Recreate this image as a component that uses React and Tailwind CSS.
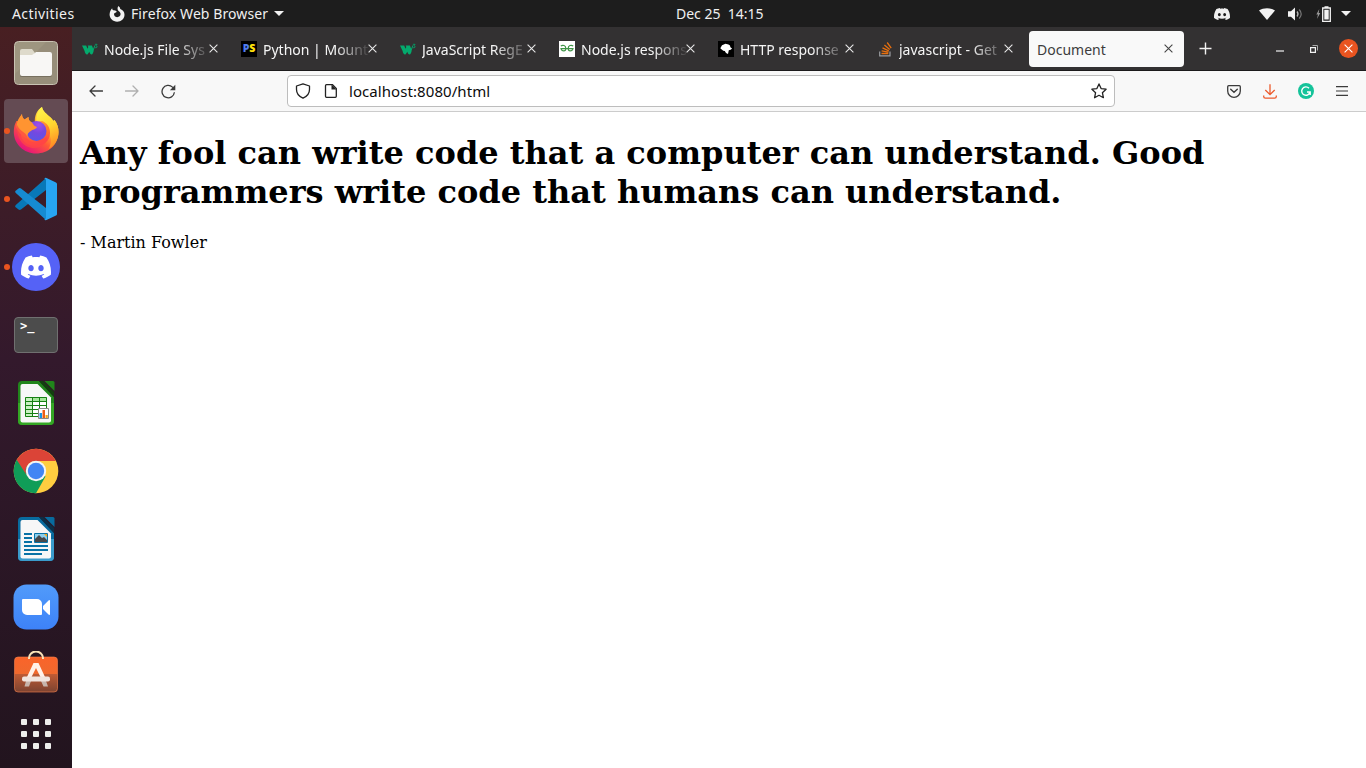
import React from "react";
import { SiDiscord } from "react-icons/si";

const W3 = () => (
  <svg width="16" height="16" viewBox="0 0 16 16">
    <path d="M0 4.600h4.200l1.300 3.200.8-1.800-.6-1.400h4.200l1.300 3.200 1.200-3.200h.9L11.700 9.300c-.2 2.400-1.200 4.200-2.200 4.200-.9 0-1.700-1.300-2.300-2.800-.9 2-1.700 3-2.500 2.800-1-.3-1.900-1.700-2.100-3.500z" fill="#04aa6d" />
    <path d="M12.900 3.300h2.200l-1.200 1.400c1.500 0 1.600 2.100 0 2.100-.5 0-.9-.2-1.100-.6" fill="none" stroke="#04aa6d" strokeWidth=".8" />
  </svg>
);
const Ps = () => (
  <span className="flex h-4 w-4 items-center justify-center bg-black font-['Open_Sans'] text-[10.500px] leading-none font-extrabold">
    <span className="text-[#4f7df0]">P</span>
    <span className="text-[#ffe00a]">S</span>
  </span>
);
const Gfg = () => (
  <svg width="16" height="16" viewBox="0 0 16 16">
    <rect width="16" height="16" fill="#fff" />
    <path d="M1.800 5c2-1.400 5-.6 5 2.400 0 3.200-3.600 3.400-4.800.3M1.400 7.600h13.200M14.200 5c-2-1.400-5-.6-5 2.400 0 3.200 3.600 3.400 4.800.3" fill="none" stroke="#419548" strokeWidth="1.200" />
  </svg>
);
const Blob = () => (
  <svg width="16" height="16" viewBox="0 0 16 16">
    <rect width="16" height="16" fill="#000" />
    <path d="M2.300 7.300 4 4.200 7.500 2.700l3 .9 1.500 1 .4 1.600 1.700 1.200-1.500 1.300-1.800.6-.8 3.800-2-1-1.200-2.200-1.500-.2L4 8.700z" fill="#fff" />
  </svg>
);
const So = () => (
  <svg width="16" height="16" viewBox="0 0 16 16">
    <path d="M2.700 10.500v4.300H13v-4.300" fill="none" stroke="#9a9ca0" strokeWidth="1.200" />
    <path d="M4.500 12.500h6.800M4.600 9.900l6.800 1.300M5.500 6.900l6.300 2.900M7.400 4l5.300 4.400M10.200 1.500l4 5.600" stroke="#e8700f" strokeWidth="1.300" />
  </svg>
);
const X = ({ c = "#e8e8e8" }) => (
  <svg width="9" height="9" viewBox="0 0 9 9" className="shrink-0">
    <path d="M.6.6l7.800 7.800M8.400.6.6 8.400" stroke={c} strokeWidth="1.100" />
  </svg>
);

const tabs = [
  { icon: <W3 />, t: "Node.js File Sys" },
  { icon: <Ps />, t: "Python | Mount" },
  { icon: <W3 />, t: "JavaScript RegE" },
  { icon: <Gfg />, t: "Node.js respons" },
  { icon: <Blob />, t: "HTTP response" },
  { icon: <So />, t: "javascript - Get" },
];

function TopBar() {
  return (
    <header className="flex h-[27px] shrink-0 items-center bg-[#1d1d1d] text-[14px] text-[#f0f0f0]">
      <span className="ml-3 w-[97px] tracking-[0.420px]">Activities</span>
      <svg width="16" height="16" viewBox="0 0 16 16">
        <path d="M9.300 0c1.200.8 1.900 1.800 2 3 2.700 1.100 4.200 3.100 4.200 5.700 0 3.900-3.300 7-7.400 7S.6 12.600.6 8.600C.6 6 1.700 3.700 3.200 2.300c0 1 .3 1.500.9 2 1.100-.2 2.200.1 3.100.8.5.4.5.9.1 1.200l-2 1c-.8 2 .8 3.900 2.900 3.900 1.900 0 3.400-1.300 3.400-3.100 0-1.300-.8-2.200-1.700-2.900C8.300 4.200 8.100 1.800 9.300 0z" fill="#f2f2f2" />
      </svg>
      <span className="ml-[6px] w-[143px] tracking-[0.090px] whitespace-nowrap">Firefox Web Browser</span>
      <svg width="10" height="5" viewBox="0 0 10 5"><path d="M0 0h10L5 5z" fill="#f2f2f2" /></svg>
      <span className="ml-[392px] w-[538px] whitespace-pre">Dec 25  14:15</span>
      <SiDiscord className="h-4 w-4 text-[#f0f0f0]" />
      <svg className="ml-[29px]" width="16" height="12" viewBox="0 0 16 12"><path d="M0 2.500C4.500-.5 11.500-.5 16 2.500L8 12z" fill="#f2f2f2" /></svg>
      <svg className="ml-[13px]" width="16" height="14" viewBox="0 0 16 14">
        <path d="M0 4.300h3L7 .5v13L3 9.700H0z" fill="#f2f2f2" />
        <path d="M9 4.500q2 2.500 0 5" fill="none" stroke="#b5b5b5" strokeWidth="1.300" />
        <path d="M11.200 2.500q4 4.500 0 9" fill="none" stroke="#777" strokeWidth="1.200" />
      </svg>
      <svg className="ml-[12px]" width="16" height="16" viewBox="0 0 16 16">
        <path d="M3.300 3 .3 8.500H2L.9 13l3.400-6H2.700z" fill="#999" />
        <path d="M6.700 2h7.600v13.300H6.700z" fill="none" stroke="#f2f2f2" strokeWidth="1.300" />
        <path d="M8.500.2h4V2h-4zM8.300 3.800h4.400v9.800H8.300z" fill="#f2f2f2" />
      </svg>
      <svg className="ml-[9px]" width="10" height="5" viewBox="0 0 10 5"><path d="M0 0h10L5 5z" fill="#f2f2f2" /></svg>
    </header>
  );
}

const Firefox = () => (
  <svg width="48" height="48" viewBox="0 0 48 48">
    <defs>
      <linearGradient id="ffBody" x1=".85" y1=".1" x2=".25" y2=".95">
        <stop offset="0" stopColor="#fff44f" /><stop offset=".35" stopColor="#ffb52a" /><stop offset=".62" stopColor="#ff5a36" /><stop offset="1" stopColor="#e5127d" />
      </linearGradient>
      <linearGradient id="ffFlame" x1=".3" y1="0" x2=".6" y2="1">
        <stop offset="0" stopColor="#fff34a" /><stop offset=".5" stopColor="#ffd62f" /><stop offset="1" stopColor="#ff8a24" />
      </linearGradient>
      <radialGradient id="ffGlobe" cx=".6" cy=".2" r=".8">
        <stop offset="0" stopColor="#a24fe8" /><stop offset=".5" stopColor="#7548e0" /><stop offset="1" stopColor="#5b55e6" />
      </radialGradient>
      <linearGradient id="ffFox" x1=".2" y1="0" x2=".5" y2="1">
        <stop offset="0" stopColor="#ffa43a" /><stop offset=".5" stopColor="#ff7a2a" /><stop offset="1" stopColor="#ff3d47" />
      </linearGradient>
    </defs>
    <path d="M30 0c1 5 5 7 8 10 2 2 3 3 3.500 4l1-1c3 4 4 8 4 12C46.500 38 36 46.500 24 46.500S1.800 37 1.800 25c0-5 1-8 2.700-11L6 14l4-7c0 3 1 4 2.500 5.500L16.500 10c0 3 1 5 6.500 6-1-7 2-13 7-16z" fill="url(#ffBody)" />
    <path d="M30 0c1 5 5 7 8 10 2 2 3 3 3.500 4l1-1c3 4 4 8 4 12 0 7-4 14-10 17 3-5 3-10 1-14-3-6-8-8-12-10-3-7 0-15 4.500-18z" fill="url(#ffFlame)" />
    <path d="M30 14c5 2 8 6 8 12 0 8-7 13-14 13-8 0-13-4-15-10 0-6 9-13 21-15z" fill="url(#ffFox)" />
    <circle cx="24.500" cy="24" r="10" fill="url(#ffGlobe)" />
    <path d="M10 7c0 3 1 4 2.500 5.500L16.500 10c0 3 1 5 4 6 1 2 2 3 4.500 4-1 3-5 2-6 4-4 2-4 5-3 8-5-2-9-6-11-10-1-4 0-9 5-15z" fill="#ff9431" />
    <path d="M5 18c3 7 10 7 11 14 3 4 9 4 12 1 3-2 6-1 7-4 0 8-6 12-13 12C12 41 4 32 5 18z" fill="#ff4545" opacity=".75" />
  </svg>
);
const Files = () => (
  <svg width="48" height="48" viewBox="0 0 48 48">
    <rect x="2.500" y="2.500" width="43" height="43" rx="4" fill="#9e9680" stroke="#c9c3b3" />
    <path d="M3 35 34 3h8a3 3 0 0 1 3 3v36a3 3 0 0 1-3 3H6a3 3 0 0 1-3-3z" fill="#8b8370" opacity=".4" />
    <path d="M8 12a2 2 0 0 1 2-2h10l3 4v6H8z" fill="#dedacb" />
    <path d="M8 37.500V16h13l3-3h14a2 2 0 0 1 2 2v21a2 2 0 0 1-2 2H10z" fill="#77705f" />
    <path d="M8 16h12l4-3h14a2 2 0 0 1 2 2v20a2 2 0 0 1-2 2H10a2 2 0 0 1-2-2z" fill="#f8f7f5" />
  </svg>
);
const Code = () => (
  <svg width="48" height="48" viewBox="0 0 48 48">
    <path d="M3.300 32q-.5-1 .5-2L34 3v12L9 34.500q-1.300.8-2.500 0l-2.500-2z" fill="#0878b8" />
    <path d="M3.300 16q-.5 1 .5 2L34 45V33L9 13.500q-1.300-.8-2.500 0L4 15.500z" fill="#168bd2" />
    <path d="M34.500 3 44 7.500q1 .5 1 1.500v30q0 1-1 1.500L34.500 45q-1.500.5-2.500-.5c1 0 2-.5 2-2v-37c0-1.500-1-2-2-2q1-1 2.500-.5z" fill="#27a5f2" />
  </svg>
);
const Discord = () => (
  <span className="flex h-12 w-12 items-center justify-center rounded-full bg-[#5562f6]">
    <SiDiscord className="h-[30px] w-[30px] text-white" />
  </span>
);
const Terminal = () => (
  <span className="flex h-9 w-11 items-start rounded-[4px] border border-[#707070] bg-[#4c4c4c] pt-[2px] pl-[5px] font-['DejaVu_Sans_Mono'] text-[12px] leading-none font-bold text-white">
    <span>&gt;_</span>
  </span>
);
const Sheet = ({ dark, light, corner, children }) => (
  <svg width="48" height="48" viewBox="0 0 48 48">
    <path d="M10 2h17l15 16v24a4 4 0 0 1-4 4H10a4 4 0 0 1-4-4V6a4 4 0 0 1 4-4z" fill={dark} />
    <path d="M6 24h36v18a4 4 0 0 1-4 4H10a4 4 0 0 1-4-4z" fill={light} />
    <path d="M10.500 5h15L39 18.500v23a2 2 0 0 1-2 2H10.500a2 2 0 0 1-2-2V7a2 2 0 0 1 2-2z" fill="#f7f7f7" />
    <path d="M27 2h4l11 11v5z" fill={corner} />
    <path d="M32.500 2H41q1.500 0 1.500 1.500V12z" fill={dark} />
    {children}
  </svg>
);
const Calc = () => (
  <Sheet dark="#21851b" light="#34a724" corner="#12400f">
    <path d="M13 18h22v20H13z" fill="#fff" /><path d="M13 18h22v4H13z" fill="#a4e59a" />
    <path d="M13 18h7v20h-7z" fill="#c8f0c0" />
    <path d="M13.500 18.500h21v19h-21zM13.500 22.500h21M13.500 26.500h21M13.500 30.500h21M13.500 34.500h21M20.500 18v20M27.500 18v20" fill="none" stroke="#178013" />
    <path d="M26.500 29.500h10v10h-10z" fill="#fff" stroke="#888" />
    <path d="M27.500 34h2.500v5h-2.500z" fill="#1697e3" /><path d="M30.500 31H33v8h-2.500z" fill="#ed5d16" /><path d="M33.500 36h2.300v3h-2.300z" fill="#f5a718" />
  </Sheet>
);
const Writer = () => (
  <Sheet dark="#086b9e" light="#3a9bcb" corner="#0b2f47">
    <path d="M12 19h8M12 23h8M12 27h8M12 31h24M12 35h24M12 39h18" stroke="#0872a6" strokeWidth="2" />
    <path d="M22.500 18.500h13v9h-13z" fill="#8bd0ef" stroke="#0872a6" />
    <path d="M23 27v-3l4-4 3 3 2-1 3 3v2z" fill="#47484a" /><path d="M32 19h3v3z" fill="#f5a718" />
  </Sheet>
);
const Chrome = () => (
  <svg width="48" height="48" viewBox="0 0 48 48">
    <circle cx="24" cy="24" r="22.300" fill="#ffcd40" />
    <path d="M24 24 4.700 12.850A22.300 22.300 0 0 0 24 46.300L33.500 29.500z" fill="#109d58" />
    <path d="M4.700 12.850A22.300 22.300 0 0 1 43.900 14H24a10 10 0 0 0-9.500 14z" fill="#db4437" />
    <circle cx="24" cy="24" r="10.200" fill="#f3f4f6" /><circle cx="24" cy="24" r="8.200" fill="#4285f4" />
  </svg>
);
const Zoom = () => (
  <svg width="48" height="48" viewBox="0 0 48 48">
    <defs><linearGradient id="zoomBg" x2="0" y2="1"><stop stopColor="#519bfa" /><stop offset="1" stopColor="#3d82f8" /></linearGradient></defs>
    <rect x="1.500" y="1.500" width="45" height="45" rx="13" fill="url(#zoomBg)" />
    <path d="M11 16h14a5 5 0 0 1 5 5v10q0 1-1 1H15a5 5 0 0 1-5-5V17q0-1 1-1zM31 23l5.500-5.500q1.500-1 1.500.5v13q0 1.500-1.500.5L31 26z" fill="#fff" />
  </svg>
);
const Software = () => (
  <svg width="48" height="48" viewBox="0 0 48 48">
    <defs><linearGradient id="bag" x2="0" y2="1"><stop stopColor="#fa642a" /><stop offset=".48" stopColor="#ef692e" /><stop offset=".5" stopColor="#bd5a34" /><stop offset="1" stopColor="#7c4331" /></linearGradient></defs>
    <rect x="2.500" y="6" width="43" height="35" rx="3.500" fill="url(#bag)" stroke="#f8824c" strokeOpacity=".6" />
    <path d="M17 8V7a7 6.500 0 0 1 14 0v1" fill="none" stroke="#f9e2b8" strokeWidth="2" />
    <path d="M15 26 21.500 12h5L33 26h-4.500l-4.500-9-4.500 9z" fill="#fff1e9" />
    <path d="M14 30h5l-2 5.500h-4.500zM29 30h5l2 5.500h-4.500z" fill="#c7b5ac" />
    <rect x="10" y="25.500" width="28" height="5" rx="2" fill="#f1e5df" />
  </svg>
);

const dock = [
  { i: <Files /> }, { i: <Firefox />, on: true, run: true }, { i: <Code />, run: true }, { i: <Discord />, run: true },
  { i: <Terminal /> }, { i: <Calc /> }, { i: <Chrome /> }, { i: <Writer /> }, { i: <Zoom /> }, { i: <Software /> },
];

function Dock() {
  return (
    <nav className="flex w-[72px] shrink-0 flex-col items-center gap-1 bg-linear-to-b from-[#481f22] via-[#33192c] via-45% to-[#22141e] pt-1">
      {dock.map((d, n) => (
        <div key={n} className={"relative flex h-16 w-16 shrink-0 items-center justify-center rounded-[4px] " + (d.on ? "bg-[#644b53]" : "")}>
          {d.run && <span className="absolute top-[29px] left-0 h-1.5 w-1.5 rounded-full bg-[#e95420]" />}
          {d.i}
        </div>
      ))}
      <div className="mt-[8px] grid grid-cols-3 gap-[6px]">
        {Array.from({ length: 9 }, (_, k) => <span key={k} className="h-[6px] w-[6px] rounded-[1px] bg-[#eeeeec]" />)}
      </div>
    </nav>
  );
}

function TabStrip() {
  return (
    <div className="flex h-11 shrink-0 items-center border-b border-[#1c1b1c] bg-[#333132] pl-[3px] text-[14px] text-[#f5f5f5]">
      <div className="flex gap-1">
        {tabs.map((t, n) => (
          <div key={n} className="flex h-9 w-[155px] items-center pl-[7px]">
            <span className="w-4 shrink-0">{t.icon}</span>
            <span className="ml-[6px] w-[105px] pt-px whitespace-nowrap [mask-image:linear-gradient(to_right,black_72px,transparent_108px)]">{t.t}</span>
            <X />
          </div>
        ))}
        <div className="flex h-9 w-[155px] items-center rounded-[4px] bg-[#f9f9f9] pl-2 text-[#3d3c3d]">
          <span className="w-[126.500px] pt-px">Document</span>
          <X c="#444" />
        </div>
      </div>
      <svg className="ml-[15px]" width="13" height="13" viewBox="0 0 13 13"><path d="M6.500.5v12M.5 6.500h12" stroke="#f2f2f2" strokeWidth="1.400" /></svg>
      <svg className="mt-[5px] ml-[64px]" width="8" height="2"><path d="M0 1h8" stroke="#f2f2f2" strokeWidth="1.200" /></svg>
      <svg className="ml-[26px]" width="8" height="8" viewBox="0 0 8 8"><path d="M.6 2.600h4.800v4.800H.6z" fill="none" stroke="#f2f2f2" strokeWidth="1.200" /><path d="M2.500.5h5v5" fill="none" stroke="#aaa" /></svg>
      <span className="ml-[21px] flex h-[19px] w-[19px] items-center justify-center rounded-full bg-[#e95420]"><X c="#fff" /></span>
    </div>
  );
}

function Toolbar() {
  return (
    <div className="flex h-[41px] shrink-0 items-center border-b border-[#cccccc] bg-[#f8f8f8] pl-[17px]">
      <svg width="14" height="12" viewBox="0 0 14 12"><path d="M13.500 6H1M6 1 1 6l5 5" fill="none" stroke="#3b3b3b" strokeWidth="1.300" strokeLinecap="round" strokeLinejoin="round" /></svg>
      <svg className="ml-[22px]" width="14" height="12" viewBox="0 0 14 12"><path d="M.5 6H13M8 1l5 5-5 5" fill="none" stroke="#b0b0b0" strokeWidth="1.300" strokeLinecap="round" strokeLinejoin="round" /></svg>
      <svg className="ml-[22px]" width="15" height="15" viewBox="0 0 15 15"><path d="M13.400 8.300a6.200 6.200 0 1 1-1.900-5.200l1.500 1.400" fill="none" stroke="#3b3b3b" strokeWidth="1.300" /><path d="M14.300.8v5.400H8.900z" fill="#3b3b3b" /></svg>
      <div className="ml-[111px] flex h-8 w-[828px] items-center rounded-[4px] border border-[#bdbdbd] bg-white pl-[7px]">
        <svg width="16" height="16" viewBox="0 0 16 16"><path d="M8 .8 14.500 3v3.500c0 4-2.500 7-6.500 8.700C4 13.500 1.500 10.500 1.500 6.500V3z" fill="none" stroke="#222" strokeWidth="1.300" strokeLinejoin="round" /></svg>
        <svg className="ml-[13px]" width="14" height="14" viewBox="0 0 14 14"><path d="M2.500.7h6l3.800 3.800v7.800q0 1-1 1H2.500q-1 0-1-1V1.700q0-1 1-1z" fill="none" stroke="#222" strokeWidth="1.300" /><path d="M7.500.5V5.500h5z" fill="#222" /></svg>
        <span className="ml-[11px] pt-px text-[15px] tracking-[0.070px] text-[#0c0c0c]">localhost:8080/html</span>
        <svg className="mr-[7px] ml-auto" width="16" height="16" viewBox="0 0 16 16"><path d="m8 .9 2.100 4.700 5 .6-3.700 3.500 1 5L8 12.300l-4.400 2.400 1-5L.9 6.200l5-.6z" fill="none" stroke="#222" strokeWidth="1.300" strokeLinejoin="round" /></svg>
      </div>
      <svg className="ml-[112px]" width="14" height="13" viewBox="0 0 14 13"><path d="M1.700.7h10.600q1 0 1 1V6a6.300 6.300 0 0 1-12.600 0V1.700q0-1 1-1z" fill="none" stroke="#3b3b3b" strokeWidth="1.300" /><path d="m3.700 4.300 3.300 3 3.300-3" fill="none" stroke="#3b3b3b" strokeWidth="1.400" strokeLinecap="round" /></svg>
      <svg className="ml-[22px]" width="14" height="15" viewBox="0 0 14 15"><path d="M7 .3v10.200M2.300 6 7 10.700 11.700 6M.7 11.500v1q0 1.700 1.700 1.700h9.200q1.700 0 1.700-1.700v-1" fill="none" stroke="#ec5a2c" strokeWidth="1.300" /></svg>
      <svg className="ml-[21px]" width="16" height="16" viewBox="0 0 16 16"><circle cx="8" cy="8" r="8" fill="#15c39a" /><path d="M11 5.200A4.200 4.200 0 1 0 12 9H9M12.200 8.300V12" fill="none" stroke="#fff" strokeWidth="1.400" /></svg>
      <svg className="ml-[22px]" width="12" height="10" viewBox="0 0 12 10"><path d="M0 .7h12M0 5h12M0 9.300h12" stroke="#3b3b3b" strokeWidth="1.200" /></svg>
    </div>
  );
}

export default function App() {
  return (
    <div className="flex h-[768px] w-[1366px] flex-col overflow-hidden bg-white font-['Noto_Sans','Open_Sans',sans-serif]">
      <TopBar />
      <div className="flex min-h-0 flex-1">
        <Dock />
        <div className="flex min-w-0 flex-1 flex-col">
          <TabStrip />
          <Toolbar />
          <main className="px-2 pt-[22px] font-['DejaVu_Serif',serif] text-black">
            <h1 className="text-[32px] leading-[38.500px] font-bold">
              Any fool can write code that a computer can understand. Good programmers write code that humans can understand.
            </h1>
            <p className="mt-[22px] text-[16px] leading-[19px]">- Martin Fowler</p>
          </main>
        </div>
      </div>
    </div>
  );
}
